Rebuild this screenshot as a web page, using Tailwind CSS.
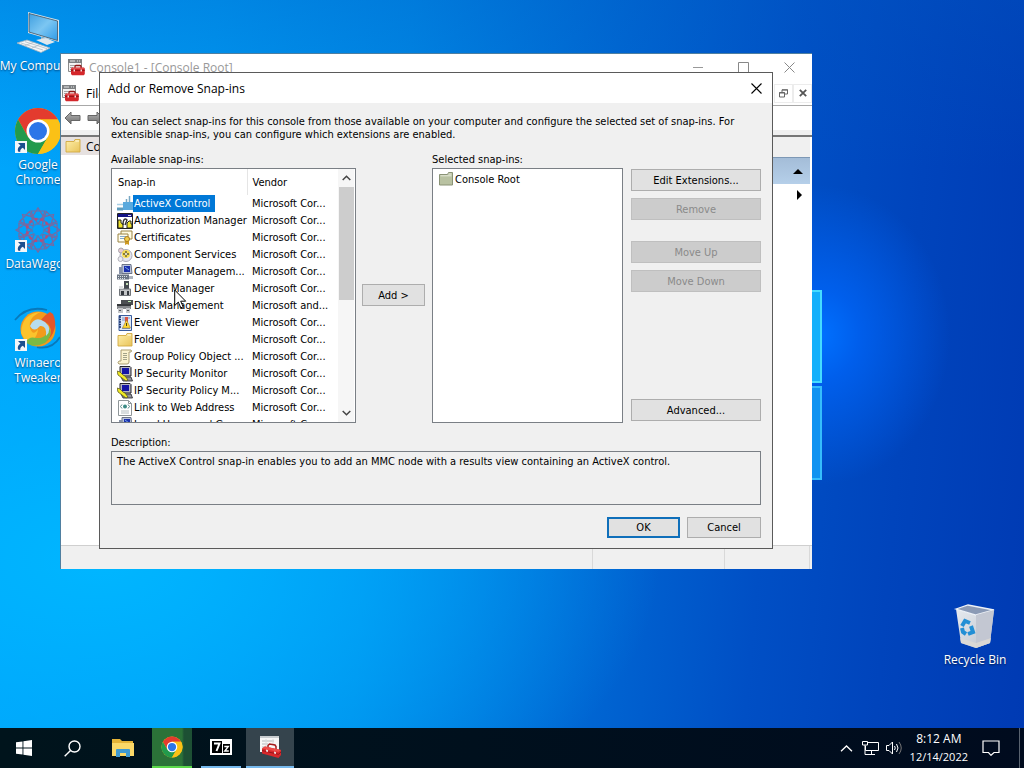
<!DOCTYPE html>
<html lang="en">
<head>
<meta charset="utf-8">
<title>Add or Remove Snap-ins</title>
<script src="https://cdn.jsdelivr.net/npm/@tailwindcss/browser@4"></script>
</head>
<body class="h-screen overflow-hidden font-['Open_Sans',sans-serif] text-[12px] leading-[15px] text-black cursor-default">

<svg class="absolute size-0" aria-hidden="true">
  <defs>
    <linearGradient id="gFolder" x1="0" y1="0" x2="1" y2="1"><stop offset="0" stop-color="#fff0ab"/><stop offset="1" stop-color="#e8c35a"/></linearGradient>
    <linearGradient id="gScreen" x1="0" y1="0" x2="1" y2="1"><stop offset="0" stop-color="#3f9fe0"/><stop offset=".5" stop-color="#7cc6f2"/><stop offset="1" stop-color="#2f9be8"/></linearGradient>
    <linearGradient id="gBin" x1="0" y1="0" x2="1" y2="1"><stop offset="0" stop-color="#e6eaf0"/><stop offset="1" stop-color="#c0c4cc"/></linearGradient>
    <linearGradient id="gArrow" x1="0" y1="0" x2="0" y2="1"><stop offset="0" stop-color="#b5b5b5"/><stop offset="1" stop-color="#6e6e6e"/></linearGradient>
  </defs>
  <symbol id="toolbox" viewBox="0 0 17 17">
    <path d="M.5.5h13v12H.5z" fill="#f3f3f3" stroke="#8a8a8a"/><path d="M0 0h14v4H0z" fill="#7d8083"/><path d="M2 2h5M9 2h1M11 2h1" stroke="#e8e8e8"/>
    <path d="M2 6.500h10M2 8.500h3M2 10.500h2" stroke="#a5a5a5"/>
    <path d="M7 9V7.500q0-1 1-1h4q1 0 1 1V9" fill="none" stroke="#8f1717" stroke-width="1.300"/>
    <path d="M3 9.500 4 8.500h12l.8 1V15l-1 1.300H4L3 15z" fill="#d4272b"/><path d="M3 11.300h13.800" stroke="#8f1015"/><path d="M5.500 10.500h1.500v2H5.500zM12.500 10.500H14v2h-1.500z" fill="#f4dcdc"/><path d="M4 9.300h12" stroke="#ef6a6a" stroke-width=".7"/>
  </symbol>
  <symbol id="toolbox-large" viewBox="0 0 23 23">
    <path d="M1 0h19v16H1z" fill="#f7f7f7"/><path d="M1 0h19v2H1z" fill="#c9cdd0"/><path d="M3 5h12M3 8h6M3 11h3" stroke="#b5b9bc"/><path d="M7 3v10M14 3v6" stroke="#dadcde"/>
    <path d="M9 12V9.500L10.500 8 16 9l1 1.500V13" fill="none" stroke="#a51a1c" stroke-width="1.500"/>
    <path d="M3 12.500 6 10.500l16 3.500v5L19.500 22 3 17.500z" fill="#d8282b"/><path d="M3 12.500 6 10.500l16 3.500-2.500 2z" fill="#ee4b48"/><path d="M3 14.500l16.500 3.800L22 16" fill="none" stroke="#95151a"/><path d="M7 13.500l2 .5v2l-2-.5zM15 15.500l2 .5v2l-2-.5z" fill="#f5dada"/>
  </symbol>
  <symbol id="folder" viewBox="0 0 16 16"><path d="M1 3.500h8l1-2h5v12.500H1z" fill="url(#gFolder)" stroke="#d1a941" stroke-width=".9"/><path d="M10.500 3h3.500" stroke="#fffbe5"/></symbol>
  <symbol id="folder-green" viewBox="0 0 16 16"><path d="M1.500 3.500h8l1-2h4v12.500h-13z" fill="#b9c2a2" stroke="#8a9376"/><path d="M10.500 3h3M2.500 4.800h11" stroke="#e5e9d9"/></symbol>
  <symbol id="activex" viewBox="0 0 16 16"><path d="M9.500 6V3M12.500 6V0" stroke="#78a8c4" stroke-width="1.500"/><path d="M0 8.500h6" stroke="#a8cfe4" stroke-width="1.500"/><path d="M6 6h10v8H6z" fill="#59a9dd"/><path d="M0 11.500h6v3H0z" fill="#5f9cbd"/></symbol>
  <symbol id="auth" viewBox="0 0 16 16"><path d="M.5.500h15v15H.5z" fill="#fff" stroke="#222"/><path d="M1 1h14v3H1z" fill="#131385"/><path d="M11 2.500h3" stroke="#ddd"/><path d="M1 7h3v3l2 1v4H1zM10 10l2-2h2v3h1v4h-5z" fill="#efe32d" stroke="#222"/><path d="M6 12c0-6 2-7 4-5l-2 5" fill="none" stroke="#333" stroke-width="1.400"/></symbol>
  <symbol id="cert" viewBox="0 0 16 16"><path d="M4 1h11v8H4z" fill="#fffbe2" stroke="#9a8442"/><path d="M1 4h10v8H1z" fill="#fffdef" stroke="#9a8442"/><path d="M3 6.500h6M3 8.500h5" stroke="#85acc9"/><path d="M8 10v5l2-1 2 1v-5z" fill="#cf9b22"/><circle cx="10" cy="9" r="2.500" fill="#f2ce4b" stroke="#a97b1e"/></symbol>
  <symbol id="component" viewBox="0 0 16 16"><circle cx="9" cy="8.500" r="6" fill="#e3e3ee" stroke="#a9a9b7"/><circle cx="4" cy="3.500" r="2.500" fill="#e9c9cf" stroke="#a5a5ad"/><circle cx="3.500" cy="12" r="2.500" fill="#ececf2" stroke="#b3b3bb"/><circle cx="9" cy="7" r="4" fill="#f7dd55"/><path d="M6 7h6M9 4v6" stroke="#675d31" stroke-width="1.400"/><circle cx="9" cy="7" r="1" fill="#fff"/></symbol>
  <symbol id="computer" viewBox="0 0 16 16"><path d="M5 .5h9l1 9H5z" fill="#b9c3dc" stroke="#6c7487"/><path d="M7 2h6v6H7z" fill="#1a2fad"/><path d="M8 3l4 3" stroke="#75a7ec"/><path d="M2 3h3v7H2z" fill="#8792a8"/><path d="M0 10.500h12v5H0z" fill="#6b7584"/><path d="M1 12.500h9M1 14.500h8" stroke="#dae1e6" stroke-dasharray="1 1"/><path d="M12 12h4v3h-4z" fill="#aeb4bd"/></symbol>
  <symbol id="device" viewBox="0 0 16 16"><path d="M7 0h5v8H7z" fill="#454a50"/><path d="M9 2h2v2H9z" fill="#c7e0b9"/><path d="M2.500 8h11v6.500h-11z" fill="#c3c5c7" stroke="#71757a"/><path d="M4 10h3v4H4zM10 10h2v4h-2z" fill="#34383e"/><path d="M2 5h4v3H2z" fill="#dcdee0"/></symbol>
  <symbol id="disk" viewBox="0 0 16 16"><path d="M4 2h12v5H4z" fill="#4b4e52"/><path d="M0 6h14v5H0z" fill="#86898d"/><path d="M0 6h14v2H0z" fill="#35383c"/><path d="M11 3.500h3" stroke="#bff1b7"/><path d="M1 10h5v5H1zM9 10h4v5H9z" fill="#c5c7ca"/><path d="M2 12.500h2M10 12.500h2" stroke="#55585c"/></symbol>
  <symbol id="event" viewBox="0 0 16 16"><path d="M2 .5h12.500v15H2z" fill="#dfe8f6" stroke="#395c9e"/><path d="M2 2h2M2 4.500h2M2 7h2M2 9.500h2M2 12h2" stroke="#142c69" stroke-width="1.300"/><path d="M5 3h8M5 5h4M5 13.500h8" stroke="#7793c4"/><path d="M8 2h3v5H8z" fill="#d65445"/><path d="M9.500 5l4 8h-8z" fill="#ffd932" stroke="#a48025" stroke-width=".6"/><path d="M9.500 8v3" stroke="#4a401a"/></symbol>
  <symbol id="scroll" viewBox="0 0 16 16"><path d="M4 1h10q1 1 0 2h-2v10q0 2-2 2H2q-2-1 0-3h2z" fill="#fcf3cf" stroke="#a99c70"/><path d="M6 4.500h4M6 6.500h4M6 8.500h4M6 10.500h4" stroke="#a3a389"/></symbol>
  <symbol id="ipsec" viewBox="0 0 16 16"><path d="M3 .5h10l1 1v8.500H3z" fill="#b6b6c0" stroke="#24242c"/><path d="M5 2h7v6H5z" fill="#1515a5"/><path d="M4 11h10l1.500 4H6z" fill="#93939c" stroke="#24242c" stroke-width=".8"/><path d="M0 5l3 1 3 3 2 1 3 4-2 1-4-3-4-3z" fill="#f2ec26" stroke="#4e4b12" stroke-width=".7"/></symbol>
  <symbol id="weblink" viewBox="0 0 16 16"><path d="M1.500.5h10l3 3v12h-13z" fill="#fff" stroke="#8f9699"/><path d="M11.500.5v3h3" fill="none" stroke="#8f9699"/><circle cx="8" cy="6.500" r="2" fill="#3c8b85"/><path d="M5 4.500 3.500 6.500 5 8.500M11 4.500l1.500 2L11 8.500" fill="none" stroke="#578c87"/><path d="M4 11h8M4 13h8" stroke="#b3bcbf"/></symbol>
  <symbol id="shortcut" viewBox="0 0 12 12"><path d="M0 0h12v12H0z" fill="#f4f6f9"/><path d="M3 2h7v7L7.800 6.800Q5 8 5.200 11L3 10.500Q2 6.500 5.500 4.500z" fill="#1c4f8f"/></symbol>
  <symbol id="chrome" viewBox="0 0 48 48">
    <circle cx="24" cy="24" r="23" fill="#fbc116"/><path d="M4.100 12.500A23 23 0 0 1 43.900 12.500L24 12.500 14 30z" fill="#e33b2e"/><path d="M4.100 12.500A23 23 0 0 0 24 47l10-17.300L14 30z" fill="#229a4c"/><path d="M24 47A23 23 0 0 0 43.900 12.500H24L34 29.700z" fill="#fbc116"/>
    <circle cx="24" cy="24" r="11.500" fill="#fff"/><circle cx="24" cy="24" r="9" fill="#2c76e8"/>
  </symbol>
</svg>

<div class="relative flex h-full flex-col bg-[linear-gradient(95deg,#00a6fc_0%,#009cf4_20%,#008be8_38%,#0068d4_58%,#004fc5_74%,#0044bc_86%,#003ab3_100%)]">

  <!-- Wallpaper light -->
  <div class="absolute inset-0 bg-[radial-gradient(ellipse_130px_150px_at_820px_335px,#0070ff_0%,#0068ffb0_30%,#0058e000_100%),radial-gradient(ellipse_560px_330px_at_100px_560px,#00b6ff_0%,#00b0ffa0_45%,#00a0f800_100%),linear-gradient(180deg,#0058c050_0%,#0058c000_22%)]"></div>
  <div class="absolute left-[640px] top-[290px] h-[93px] w-[182px] border-2 border-[#45dcff] bg-[#14b0fb]"></div>
  <div class="absolute left-[640px] top-[386px] h-[94px] w-[182px] border-2 border-[#35bdfc] bg-[#1193f1]"></div>

  <main class="relative flex-1">
    <!-- Desktop shortcuts -->
    <div class="flex w-[76px] flex-col pt-[8px] text-center text-white [text-shadow:0_1px_2px_#003a70]">
      <a href="#" class="flex h-[99px] flex-col items-center whitespace-nowrap"><svg class="mb-[2px] size-[48px]" viewBox="0 0 48 48"><path d="M14 4 45 12v22L14 25z" fill="#d6e5ee"/><path d="M15 5.500 43.500 13v19.500L15 24z" fill="url(#gScreen)" stroke="#41525f" stroke-width=".8"/><path d="M27 29l9 3v3l-9-2z" fill="#aebbc4"/><path d="M22 32l10-2 9 4-8 3z" fill="#dfe7ec"/><path d="M3 35l10-3 23 8-9 4.500z" fill="#f3f6f8" stroke="#9fb0bc" stroke-width=".8"/><path d="M7 35l22 7M11 33.700l22 7M11 37.500l8-3M18 40l8-3.500" stroke="#a7b5bf" stroke-width=".7"/></svg>My Computer</a>
      <a href="#" class="flex h-[99px] flex-col items-center"><span class="relative mb-[2px] size-[48px]"><svg class="size-[48px]"><use href="#chrome"/></svg><svg class="absolute bottom-[2px] left-[1px] size-[12px]"><use href="#shortcut"/></svg></span>Google<br>Chrome</a>
      <a href="#" class="flex h-[99px] flex-col items-center"><span class="relative mb-[2px] size-[48px]"><svg class="size-[48px]" viewBox="0 0 48 48"><g fill="none" stroke="#79689f" stroke-width="1.200"><path id="petal" d="M24 18 19 10 24 2l5 8zM17 5h14l-3 8h-8z"/><use href="#petal" transform="rotate(45 24 24)"/><use href="#petal" transform="rotate(90 24 24)"/><use href="#petal" transform="rotate(135 24 24)"/><use href="#petal" transform="rotate(180 24 24)"/><use href="#petal" transform="rotate(225 24 24)"/><use href="#petal" transform="rotate(270 24 24)"/><use href="#petal" transform="rotate(315 24 24)"/></g><circle cx="24" cy="24" r="11" fill="none" stroke="#b04f7c" stroke-width="2.500" stroke-dasharray="3 3"/><circle cx="24" cy="24" r="6" fill="none" stroke="#4c7fbf" stroke-width="1.500" stroke-dasharray="3 1"/></svg><svg class="absolute bottom-[2px] left-[1px] size-[12px]"><use href="#shortcut"/></svg></span>DataWagon</a>
      <a href="#" class="flex h-[99px] flex-col items-center"><span class="relative mb-[2px] size-[48px]"><svg class="size-[48px]" viewBox="0 0 48 48"><path d="M1 15Q13 0 33 5M46 32Q38 45 23 42" fill="none" stroke="#0878ba" stroke-width="1.800"/><circle cx="24" cy="24" r="17.500" fill="#f39a1c"/><path d="M24 24Q25 13 36 7l3 2Q46 25 31 38 41 28 34 19 28 14 24 24" fill="#e4572a"/><path d="M7 28Q8 8 27 7 14 12 16 23 19 32 24 24 23 36 12 37z" fill="#fbc32c"/><path d="M12 37Q18 44 31 38 41 28 33 21 35 34 22 33 15 31 12 37" fill="#7bb944"/><path d="M16 21Q21 10 31 17q8 7 1 14 1-11-6-10-6 7-10 0" fill="#b7dced"/></svg><svg class="absolute bottom-[2px] left-[1px] size-[12px]"><use href="#shortcut"/></svg></span>Winaero<br>Tweaker</a>
    </div>
    <a href="#" class="absolute bottom-[61px] right-[11px] flex w-[76px] flex-col items-center text-center text-white [text-shadow:0_1px_2px_#001c50]"><svg class="mb-[2px] size-[48px]" viewBox="0 0 48 48"><path d="M5 7 25 13 43 8 39 41 25 46 10 41z" fill="url(#gBin)"/><path d="M5 7 17 3 43 8 25 13z" fill="#8b9ab5" stroke="#eef2f7" stroke-width="1.300"/><path d="M25 13 43 8 39 41 25 46z" fill="#c3c7d2"/><path d="M9 36l16 5 15-5-1 5-14 5-15-5z" fill="#dedbd5" opacity=".8"/><g fill="none" stroke="#238fd5" stroke-width="4"><path d="M11 24l3-5 5 2"/><path d="M20 24l2 6-5 2"/><path d="M15 32l-3-2-1-4"/></g></svg>Recycle Bin</a>

    <!-- Console window -->
    <section class="absolute left-[60px] top-[53px] flex h-[516px] w-[752px] flex-col border-l border-t border-[#4f7fa0] bg-white">
      <header class="flex h-[27px] shrink-0 items-center pl-[7px] text-[#999]">
        <svg class="mr-[4px] size-[17px]"><use href="#toolbox"/></svg>
        <span class="flex-1">Console1 - [Console Root]</span>
        <button class="flex h-full w-[45px] items-center justify-center" aria-label="Minimize"><svg class="size-[11px]" viewBox="0 0 11 11"><path d="M0 5.500h10" stroke="#999"/></svg></button>
        <button class="flex h-full w-[45px] items-center justify-center" aria-label="Maximize"><svg class="size-[11px]" viewBox="0 0 11 11"><path d="M.5.500h10v10H.5z" fill="none" stroke="#888"/></svg></button>
        <button class="flex h-full w-[46px] items-center justify-center" aria-label="Close"><svg class="size-[11px]" viewBox="0 0 11 11"><path d="M.5.500l10 10M10.500.500l-10 10" stroke="#888"/></svg></button>
      </header>
      <nav class="flex h-[25px] shrink-0 items-center border-b border-[#a8a8a8] pl-[1px]">
        <svg class="mr-[7px] size-[17px]"><use href="#toolbox"/></svg>
        <button class="flex-1 text-left">File</button>
        <button class="flex size-[19px] items-center justify-center border border-[#ececec]" aria-label="Restore console"><svg class="size-[9px]" viewBox="0 0 9 9"><path d="M3 3V.8h5.500V5H6M.5 3.500h5V8h-5z" fill="none" stroke="#666"/><path d="M0 4h6M3 1h6" stroke="#666"/></svg></button>
        <button class="flex size-[19px] items-center justify-center border border-[#ececec]" aria-label="Close console"><svg class="size-[8px]" viewBox="0 0 8 8"><path d="M.8.8l6.400 6.400M7.200.8.8 7.200" stroke="#555" stroke-width="1.800"/></svg></button>
      </nav>
      <div class="flex h-[24px] shrink-0 items-center gap-[6px] pl-[3px]">
        <button aria-label="Back"><svg class="h-[14px] w-[17px]" viewBox="0 0 17 14"><path d="M1 7l6-6v3.500h9v5H7V13z" fill="url(#gArrow)" stroke="#666"/></svg></button>
        <button aria-label="Forward"><svg class="h-[14px] w-[17px]" viewBox="0 0 17 14"><path d="M16 7l-6-6v3.500H1v5h9V13z" fill="url(#gArrow)" stroke="#666"/></svg></button>
      </div>
      <div class="h-[5px] shrink-0 bg-[#f0f0f0]"></div>
      <div class="flex flex-1 border-t-2 border-[#777]">
        <div class="flex-1"><div class="flex h-[18px] items-center bg-[#e6e1e0] pl-[4px]"><svg class="mr-[5px] size-[16px]"><use href="#folder"/></svg>Console Root</div></div>
        <div class="mr-[2px] w-[150px]">
          <div class="h-[20px] bg-[#f0f0f0]"></div>
          <button class="flex h-[27px] w-full items-center justify-end border-t border-[#7d98b5] bg-linear-to-b from-[#a4bdd8] to-[#b5cfe9] pr-[7px]" aria-label="Collapse actions"><svg class="h-[5px] w-[10px]" viewBox="0 0 10 5"><path d="M0 5 5 0l5 5z"/></svg></button>
          <button class="flex h-[22px] w-full items-center justify-end pr-[8px]" aria-label="More actions"><svg class="h-[10px] w-[5px]" viewBox="0 0 5 10"><path d="M0 0l5 5-5 5z"/></svg></button>
        </div>
      </div>
      <footer class="flex h-[24px] shrink-0 border-t border-[#cfcfcf] bg-[#f0f0f0]"><span class="flex-1"></span><span class="w-[132px] border-l border-[#d9d9d9]"></span><span class="w-[86px] border-x border-[#d9d9d9]"></span><span class="w-[2px]"></span></footer>
    </section>

    <!-- Add or Remove Snap-ins dialog -->
    <section role="dialog" aria-labelledby="dlg" class="absolute left-[99px] top-[72px] w-[674px] border border-[#5a5a5a] bg-[#f0f0f0] font-['DejaVu_Sans_Condensed','DejaVu_Sans',sans-serif] text-[11px] leading-[13px]">
      <header class="flex h-[30px] items-center bg-white pl-[8px] font-['Open_Sans',sans-serif] text-[12px]">
        <h1 id="dlg" class="flex-1">Add or Remove Snap-ins</h1>
        <button class="flex h-full w-[31px] items-center justify-center" aria-label="Close"><svg class="size-[11px]" viewBox="0 0 11 11"><path d="M.5.500l10 10M10.500.500l-10 10" stroke="#000" stroke-width="1.100"/></svg></button>
      </header>
      <div class="px-[11px] pb-[10px] pt-[12px]">
        <p>You can select snap-ins for this console from those available on your computer and configure the selected set of snap-ins. For<br>extensible snap-ins, you can configure which extensions are enabled.</p>
        <div class="mt-[12px] flex">
          <div class="w-[245px]">
            <h2 id="avail" class="mb-[2px]">Available snap-ins:</h2>
            <div class="flex h-[255px] overflow-hidden border border-[#7a7f85] bg-white">
              <table aria-labelledby="avail" class="w-[226px] shrink-0 table-fixed self-start whitespace-nowrap text-left">
                <thead><tr class="h-[26px]"><th class="w-[135px] border-r border-[#e5e5e5] pl-[6px] font-normal">Snap-in</th><th class="pl-[5px] font-normal">Vendor</th></tr></thead>
                <tbody id="rows"></tbody>
              </table>
              <div class="flex w-[16px] flex-col items-center bg-[#f6f6f6]">
                <button class="flex h-[18px] w-full items-center justify-center" aria-label="Scroll up"><svg class="h-[6px] w-[9px]" viewBox="0 0 9 6"><path d="M.7 5 4.500 1.200 8.300 5" fill="none" stroke="#444" stroke-width="1.500"/></svg></button>
                <div class="h-[113px] w-[15px] bg-[#cdcdcd]"></div>
                <div class="flex-1"></div>
                <button class="flex h-[18px] w-full items-center justify-center" aria-label="Scroll down"><svg class="h-[6px] w-[9px]" viewBox="0 0 9 6"><path d="M.7 1 4.500 4.800 8.300 1" fill="none" stroke="#444" stroke-width="1.500"/></svg></button>
              </div>
            </div>
          </div>
          <div class="flex w-[76px] flex-col items-center pr-[1px] pt-[131px]"><button class="h-[22px] w-[63px] border border-[#adadad] bg-[#e1e1e1]">Add &gt;</button></div>
          <div class="w-[191px]">
            <h2 class="mb-[2px]">Selected snap-ins:</h2>
            <div class="h-[255px] border border-[#7a7f85] bg-white pl-[5px] pt-[1px]"><div class="flex h-[18px] items-center"><svg class="size-[16px]"><use href="#folder-green"/></svg><span class="px-px">Console Root</span></div></div>
          </div>
          <div class="ml-[8px] flex flex-1 flex-col pt-[16px] *:h-[22px] *:shrink-0 *:border">
            <button class="border-[#adadad] bg-[#e1e1e1]">Edit Extensions...</button>
            <button disabled class="mt-[7px] border-[#bfbfbf] bg-[#cccccc] text-[#8a8a8a]">Remove</button>
            <button disabled class="mt-[21px] border-[#bfbfbf] bg-[#cccccc] text-[#8a8a8a]">Move Up</button>
            <button disabled class="mt-[7px] border-[#bfbfbf] bg-[#cccccc] text-[#8a8a8a]">Move Down</button>
            <button class="mb-[2px] mt-auto border-[#adadad] bg-[#e1e1e1]">Advanced...</button>
          </div>
        </div>
        <h2 class="mb-[2px] mt-[13px]">Description:</h2>
        <p class="h-[54px] border border-[#7a7f85] px-[5px] py-[3px]">The ActiveX Control snap-in enables you to add an MMC node with a results view containing an ActiveX control.</p>
        <div class="mt-[12px] flex justify-end gap-[7px]">
          <button class="h-[21px] w-[73px] border-2 border-[#0f6fba] bg-[#e1e1e1]">OK</button>
          <button class="h-[21px] w-[74px] border border-[#adadad] bg-[#e1e1e1]">Cancel</button>
        </div>
      </div>
    </section>

    <!-- Mouse pointer -->
    <svg class="absolute left-[174px] top-[289px] h-[20px] w-[13px]" viewBox="0 0 13 20"><path d="M.7 1v15.500l3.600-3.400 2.500 5.700 2.400-1-2.500-5.600h5z" fill="#fff" stroke="#000"/></svg>
  </main>

  <!-- Taskbar -->
  <footer class="relative flex h-[40px] shrink-0 items-stretch bg-linear-to-r from-[#00141c] to-[#000b1e] text-white">
    <button class="flex w-[48px] items-center justify-center" aria-label="Start"><svg class="size-[16px]" viewBox="0 0 16 16" fill="#fff"><path d="M0 2.300 6.500 1.400v6.100H0zM7.400 1.300 16 0v7.500H7.400zM0 8.400h6.500v6.200L0 13.700zM7.400 8.400H16V16l-8.600-1.200z"/></svg></button>
    <button class="flex w-[48px] items-center justify-center" aria-label="Search"><svg class="size-[17px]" viewBox="0 0 17 17" fill="none" stroke="#fff" stroke-width="1.400"><circle cx="10.500" cy="6.500" r="5.500"/><path d="M6.500 10.500.7 16.300"/></svg></button>
    <button class="flex w-[54px] items-center justify-center" aria-label="File Explorer"><svg class="h-[18px] w-[22px]" viewBox="0 0 22 18"><path d="M0 0h8l2 2h11v15H0z" fill="#e5b437"/><path d="M0 4h22v13H0z" fill="#fbd968"/><path d="M4 18v-7q0-1 1-1h12q1 0 1 1v7h-4v-4H8v4z" fill="#3f9ad2"/></svg></button>
    <button class="ml-[2px] flex w-[40px] items-center justify-center border-b-2 border-[#5bd84a] bg-linear-to-r from-[#2b7238] from-75% to-[#1d5034] to-80%" aria-label="Google Chrome"><svg class="size-[22px]"><use href="#chrome"/></svg></button>
    <button class="ml-[9px] flex w-[40px] items-center justify-center border-b-2 border-[#76b9ed]" aria-label="7-Zip"><svg class="h-[16px] w-[22px]" viewBox="0 0 22 16"><path d="M0 0h22v16H0z" fill="#fff"/><path d="M2 2h10v12H2zM13 5h7v9h-7z" fill="#000"/><path d="M4 4.500h5.500L6.500 12" fill="none" stroke="#fff" stroke-width="2"/><path d="M14.300 7.500h4l-3.500 4.500h4" fill="none" stroke="#fff" stroke-width="1.400"/></svg></button>
    <button class="ml-[5px] flex w-[48px] items-center justify-center border-b-2 border-[#76b9ed] bg-[#35444d]" aria-label="Console1"><svg class="size-[23px]"><use href="#toolbox-large"/></svg></button>
    <div class="ml-auto flex items-center">
      <button class="mr-[9px]" aria-label="Show hidden icons"><svg class="h-[7px] w-[13px]" viewBox="0 0 13 7"><path d="M1 6.300 6.500 1 12 6.300" fill="none" stroke="#fff" stroke-width="1.300"/></svg></button>
      <button class="mr-[7px]" aria-label="Network"><svg class="h-[14px] w-[17px]" viewBox="0 0 17 14" fill="none" stroke="#fff"><path d="M6 1.500h10.500v8H3.500V5M9.500 9.500v4M6 13.500h7"/><path d="M.5.500h5v3.500h-5zM3 4v9.500h3"/></svg></button>
      <button class="mr-[8px]" aria-label="Volume"><svg class="h-[14px] w-[16px]" viewBox="0 0 16 14" fill="none" stroke="#fff"><path d="M.5 4.500h2.500L6.500 1v12L3 9.500H.5zM8.500 5q1.500 2 0 4M10.500 3q3 4 0 8"/><path d="M13 1q4.500 6 0 12" stroke="#777"/></svg></button>
      <time class="mr-[14px] text-center leading-[18px]"><span class="block">8:12 AM</span><span class="block text-[11px]">12/14/2022</span></time>
      <button class="mr-[19px]" aria-label="Notifications"><svg class="h-[16px] w-[18px]" viewBox="0 0 18 16"><path d="M1 1h16v11.500h-5L9 15.300 6.500 12.500H1z" fill="none" stroke="#fff" stroke-width="1.200"/></svg></button>
      <button class="h-[40px] w-[5px] border-l border-[#59636f]" aria-label="Show desktop"></button>
    </div>
  </footer>
</div>

<script>
const snapins = [
  ["activex", "ActiveX Control"], ["auth", "Authorization Manager"], ["cert", "Certificates"],
  ["component", "Component Services"], ["computer", "Computer Managem..."], ["device", "Device Manager"],
  ["disk", "Disk Management", "Microsoft and..."], ["event", "Event Viewer"], ["folder", "Folder"],
  ["scroll", "Group Policy Object ..."], ["ipsec", "IP Security Monitor"], ["ipsec", "IP Security Policy M..."],
  ["weblink", "Link to Web Address"], ["computer", "Local Users and Gr..."]
];
document.getElementById("rows").innerHTML = snapins.map(([icon, name, vendor = "Microsoft Cor..."], i) =>
  `<tr class="h-[17px]"${i ? "" : ' aria-selected="true"'}><td class="p-0 pl-[5px]"><div class="flex h-[17px] items-center"><svg class="size-[16px] shrink-0"><use href="#${icon}"/></svg><span class="${i ? "pl-[1px]" : "bg-[#0078d7] pl-[1px] pr-[5px] py-[2px] text-white"}">${name}</span></div></td><td class="p-0 pl-[5px]">${vendor}</td></tr>`).join("");
</script>
</body>
</html>
